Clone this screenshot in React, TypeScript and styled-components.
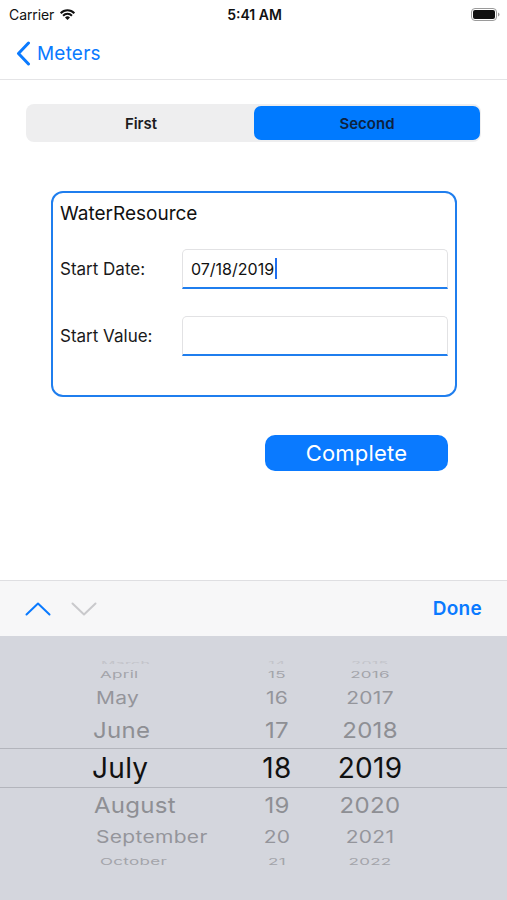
import React from 'react';
import styled, { createGlobalStyle } from 'styled-components';

const GlobalStyle = createGlobalStyle`
    html, body {
        margin: 0;
        padding: 0;
        background: #ffffff;
    }
    body {
        font-family: Inter, 'Noto Sans', 'Liberation Sans', sans-serif;
        -webkit-font-smoothing: antialiased;
    }
`;

const BLUE = '#0a7aff';

// STYLE
const Screen = styled.div`
    width: 507px;
    height: 900px;
    display: flex;
    flex-direction: column;
    overflow: hidden;
    background: #fff;
`;

const StatusBar = styled.div`
    height: 28px;
    display: grid;
    grid-template-columns: 1fr auto 1fr;
    align-items: center;
    padding: 0 7px 0 9px;
    font-size: 14px;
    color: #111;
`;

const Carrier = styled.div`
    display: flex;
    align-items: center;
    gap: 5px;
    letter-spacing: -0.1px;
`;

const Clock = styled.div`
    font-weight: 600;
`;

const Battery = styled.div`
    justify-self: end;
    display: flex;
`;

const NavBar = styled.div`
    height: 51px;
    display: flex;
    align-items: center;
    gap: 6px;
    padding: 0 0 0 16px;
    border-bottom: 1px solid #e4e4e6;
    color: ${BLUE};
    font-size: 19px;
    letter-spacing: 0.2px;
`;

const Content = styled.div`
    flex: 1;
    display: flex;
    flex-direction: column;
`;

const Segmented = styled.div`
    margin: 24px 26px 0;
    height: 38px;
    box-sizing: border-box;
    padding: 2px 1px 2px 2px;
    display: flex;
    background: #eeeeef;
    border-radius: 8px;
`;

const Segment = styled.div<{ $active?: boolean }>`
    flex: 1;
    display: flex;
    align-items: center;
    justify-content: center;
    font-size: 15px;
    font-weight: 600;
    border-radius: 7px;
    color: ${(p) => (p.$active ? '#0d2240' : '#1c1c1e')};
    background: ${(p) => (p.$active ? '#007aff' : 'transparent')};
`;

const Card = styled.div`
    margin: 49px 50px 0 51px;
    height: 206px;
    box-sizing: border-box;
    border: 2px solid #1f7eee;
    border-radius: 12px;
    padding: 8px 7px 0 7px;
    display: flex;
    flex-direction: column;
`;

const CardTitle = styled.div`
    height: 24px;
    display: flex;
    align-items: center;
    font-size: 19px;
    color: #111;
    margin-bottom: 24px;
`;

const FieldRow = styled.div`
    display: grid;
    grid-template-columns: 122px 1fr;
    align-items: center;
    margin-bottom: 27px;
`;

const Label = styled.div`
    font-size: 17px;
    color: #1a1a1a;
`;

const Input = styled.div`
    height: 40px;
    box-sizing: border-box;
    border: 1px solid #e2e2e4;
    border-bottom: 2px solid #1f7eee;
    border-radius: 5px 5px 0 0;
    padding: 0 8px;
    display: flex;
    align-items: center;
    font-size: 16px;
    color: #111;
`;

const Caret = styled.span`
    display: inline-block;
    width: 2px;
    height: 21px;
    margin-left: 1px;
    background: #1f6ff0;
`;

const ButtonRow = styled.div`
    display: flex;
    justify-content: flex-end;
    padding: 38px 59px 0 0;
`;

const PrimaryButton = styled.button`
    width: 183px;
    height: 36px;
    border: none;
    border-radius: 10px;
    background: ${BLUE};
    color: #fff;
    font-family: inherit;
    font-size: 22px;
    letter-spacing: 0.2px;
`;

const Toolbar = styled.div`
    height: 55px;
    border-top: 1px solid #dfdfe2;
    background: #f7f7f8;
    display: flex;
    align-items: center;
    padding: 0 25px 0 25px;
`;

const ToolArrows = styled.div`
    display: flex;
    gap: 20px;
    flex: 1;
`;

const DoneButton = styled.div`
    color: ${BLUE};
    font-size: 19px;
    font-weight: 600;
    letter-spacing: 0.3px;
`;

const Picker = styled.div`
    height: 264px;
    background: #d4d6dd;
    padding-top: 20px;
    box-sizing: border-box;
    display: flex;
    flex-direction: column;
`;

const PickerRow = styled.div<{ $h: number; $sel?: boolean }>`
    height: ${(p) => p.$h}px;
    flex-shrink: 0;
    display: grid;
    grid-template-columns: 92px 152px 66px 120px 1fr;
    align-items: center;
    box-sizing: border-box;
    border-top: ${(p) => (p.$sel ? '1.5px solid #b3b5bc' : 'none')};
    border-bottom: ${(p) => (p.$sel ? '1.5px solid #b3b5bc' : 'none')};
    overflow: hidden;
`;

const Cell = styled.div<{ $fs: number; $sy: number; $c: string; $dx: number; $align: string }>`
    grid-column: ${(p) => (p.$align === 'left' ? 2 : 'auto')};
    text-align: ${(p) => p.$align};
    font-size: ${(p) => p.$fs}px;
    line-height: 1;
    color: ${(p) => p.$c};
    white-space: nowrap;
    letter-spacing: 0.3px;
    transform: translateX(${(p) => (p.$align === 'left' ? p.$dx : 0)}px) scaleY(${(p) => p.$sy});
    transform-origin: center;
`;

// DATA
const rows = [
    { m: 'March', d: '14', y: '2015', h: 8, fs: 16, sy: 0.35, c: '#c3c4ca', dx: 9 },
    { m: 'April', d: '15', y: '2016', h: 20, fs: 17, sy: 0.55, c: '#a3a4aa', dx: 8 },
    { m: 'May', d: '16', y: '2017', h: 29, fs: 21, sy: 0.8, c: '#94959b', dx: 4 },
    { m: 'June', d: '17', y: '2018', h: 35, fs: 24, sy: 0.92, c: '#8e8f94', dx: 1 },
    { m: 'July', d: '18', y: '2019', h: 40, fs: 28, sy: 1, c: '#111111', dx: 0, sel: true },
    { m: 'August', d: '19', y: '2020', h: 35, fs: 24, sy: 0.92, c: '#8e8f94', dx: 2 },
    { m: 'September', d: '20', y: '2021', h: 28, fs: 21, sy: 0.8, c: '#94959b', dx: 4 },
    { m: 'October', d: '21', y: '2022', h: 20, fs: 17, sy: 0.55, c: '#a3a4aa', dx: 8 },
    { m: 'November', d: '22', y: '2023', h: 6, fs: 16, sy: 0.3, c: '#c6c7cd', dx: 10 },
];

const WifiIcon = () => (
    <svg width="17" height="12" viewBox="0 0 18 13">
        <path d="M9 13 L6.3 10.2 A3.8 3.8 0 0 1 11.7 10.2 Z" fill="#111" />
        <path d="M4.2 8.3 A6.8 6.8 0 0 1 13.8 8.3" stroke="#111" strokeWidth="2.2" fill="none" />
        <path d="M1.6 5.6 A10.5 10.5 0 0 1 16.4 5.6" stroke="#111" strokeWidth="2.2" fill="none" />
    </svg>
);

const BatteryIcon = () => (
    <svg width="29" height="13" viewBox="0 0 29 13">
        <rect x="0.5" y="0.5" width="25" height="12" rx="3.5" fill="none" stroke="#9a9a9a" />
        <rect x="2" y="2" width="22" height="9" rx="2" fill="#111" />
        <path d="M27 4.5 Q28.5 4.8 28.5 6.5 Q28.5 8.2 27 8.5 Z" fill="#9a9a9a" />
    </svg>
);

const BackChevron = () => (
    <svg width="15" height="25" viewBox="0 0 15 25">
        <path d="M12.5 2 L2.5 12.5 L12.5 23" stroke={BLUE} strokeWidth="3" fill="none" strokeLinecap="round" strokeLinejoin="round" />
    </svg>
);

const Chevron = ({ up, color }: { up?: boolean; color: string }) => (
    <svg width="26" height="14" viewBox="0 0 26 14">
        <path
            d={up ? 'M1.5 12.5 L13 1.5 L24.5 12.5' : 'M1.5 1.5 L13 12.5 L24.5 1.5'}
            stroke={color}
            strokeWidth="2"
            fill="none"
            strokeLinecap="round"
            strokeLinejoin="round"
        />
    </svg>
);

const App: React.FC = () => {
    return (
        <Screen>
            <GlobalStyle />
            {/* SECTION :: STATUS BAR */}
            <StatusBar>
                <Carrier>
                    Carrier <WifiIcon />
                </Carrier>
                <Clock>5:41 AM</Clock>
                <Battery>
                    <BatteryIcon />
                </Battery>
            </StatusBar>

            {/* SECTION :: NAV */}
            <NavBar>
                <BackChevron />
                <span>Meters</span>
            </NavBar>

            {/* SECTION :: CONTENT */}
            <Content>
                <Segmented>
                    <Segment>First</Segment>
                    <Segment $active>Second</Segment>
                </Segmented>

                <Card>
                    <CardTitle>WaterResource</CardTitle>
                    <FieldRow>
                        <Label>Start Date:</Label>
                        <Input>
                            07/18/2019
                            <Caret />
                        </Input>
                    </FieldRow>
                    <FieldRow>
                        <Label>Start Value:</Label>
                        <Input />
                    </FieldRow>
                </Card>

                <ButtonRow>
                    <PrimaryButton>Complete</PrimaryButton>
                </ButtonRow>
            </Content>

            {/* SECTION :: KEYBOARD TOOLBAR */}
            <Toolbar>
                <ToolArrows>
                    <Chevron up color={BLUE} />
                    <Chevron color="#c9c9cc" />
                </ToolArrows>
                <DoneButton>Done</DoneButton>
            </Toolbar>

            {/* SECTION :: DATE PICKER */}
            <Picker>
                {rows.map((r) => (
                    <PickerRow key={r.m} $h={r.h} $sel={r.sel}>
                        <Cell $fs={r.fs} $sy={r.sy} $c={r.c} $dx={r.dx} $align="left">
                            {r.m}
                        </Cell>
                        <Cell $fs={r.fs} $sy={r.sy} $c={r.c} $dx={r.dx} $align="center">
                            {r.d}
                        </Cell>
                        <Cell $fs={r.fs} $sy={r.sy} $c={r.c} $dx={r.dx} $align="center">
                            {r.y}
                        </Cell>
                    </PickerRow>
                ))}
            </Picker>
        </Screen>
    );
};

export default App;
